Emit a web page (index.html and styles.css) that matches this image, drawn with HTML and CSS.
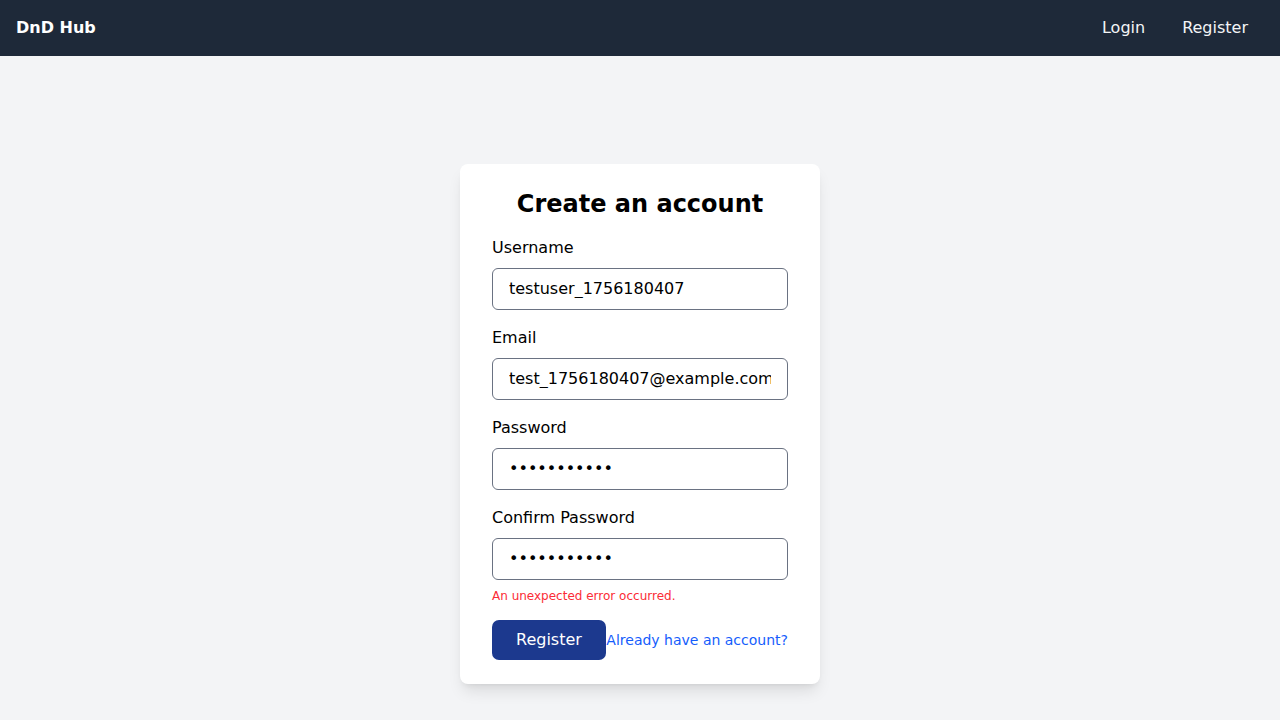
FILE: index.html
```html
<!DOCTYPE html>
<html lang="en">
<head>
<meta charset="utf-8">
<title>DnD Hub - Register</title>
<link rel="stylesheet" href="styles.css">
</head>
<body>
<header class="topbar">
  <a class="brand" href="#">DnD Hub</a>
  <nav class="nav">
    <a href="#">Login</a>
    <a href="#">Register</a>
  </nav>
</header>
<main class="main">
  <form class="card">
    <h1 class="title">Create an account</h1>
    <div class="field">
      <label for="u">Username</label>
      <input id="u" type="text" value="testuser_1756180407">
    </div>
    <div class="field">
      <label for="e">Email</label>
      <input id="e" type="text" value="test_1756180407@example.com">
    </div>
    <div class="field">
      <label for="p">Password</label>
      <input id="p" type="password" value="password123">
    </div>
    <div class="field field-last">
      <label for="c">Confirm Password</label>
      <input id="c" type="password" value="password123">
    </div>
    <p class="error">An unexpected error occurred.</p>
    <div class="actions">
      <button type="button" class="btn">Register</button>
      <a class="link" href="#">Already have an account?</a>
    </div>
  </form>
</main>
</body>
</html>
```
FILE: styles.css
```css
* { box-sizing: border-box; }
html, body { margin: 0; padding: 0; }
body {
  font-family: "DejaVu Sans", sans-serif;
  background: #f3f4f6;
  color: #111;
  min-height: 720px;
}
.topbar {
  height: 56px;
  background: #1e2939;
  display: flex;
  align-items: center;
  justify-content: space-between;
  padding: 0 32px 2px 16px;
}
.brand {
  color: #fff;
  font-weight: bold;
  font-size: 16px;
  text-decoration: none;
}
.nav { display: flex; gap: 37px; }
.nav a {
  color: #f3f4f6;
  text-decoration: none;
  font-size: 16px;
}
.main {
  display: flex;
  justify-content: center;
  padding-top: 108px;
}
.card {
  width: 360px;
  background: #fff;
  border-radius: 8px;
  padding: 24px 32px;
  box-shadow: 0 10px 15px -3px rgba(0,0,0,0.1), 0 4px 6px -4px rgba(0,0,0,0.1);
}
.title {
  margin: 0 0 16px;
  font-size: 24px;
  line-height: 32px;
  font-weight: bold;
  text-align: center;
  color: #000;
}
.field { margin-bottom: 16px; }
.field-last { margin-bottom: 0; }
.field label {
  display: block;
  font-size: 16px;
  line-height: 24px;
  margin-bottom: 8px;
  color: #000;
}
.field input {
  display: block;
  width: 100%;
  height: 42px;
  padding: 7px 16px 9px;
  font-family: "DejaVu Sans", sans-serif;
  font-size: 16px;
  line-height: 24px;
  border: 1px solid #6a7282;
  border-radius: 6px;
  color: #000;
  background: #fff;
  outline: none;
}
.error {
  margin: 8px 0 16px;
  font-size: 12px;
  line-height: 16px;
  color: #fb2c36;
}
.actions {
  display: flex;
  justify-content: space-between;
  align-items: center;
}
.btn {
  height: 40px;
  padding: 8px 24px;
  background: #1c398e;
  color: #fff;
  border: none;
  border-radius: 7px;
  font-family: "DejaVu Sans", sans-serif;
  font-size: 16px;
  line-height: 24px;
}
.link {
  color: #155dfc;
  font-size: 14px;
  text-decoration: none;
}
```
